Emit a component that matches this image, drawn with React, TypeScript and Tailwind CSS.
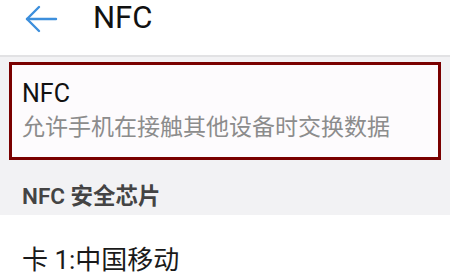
import React from "react";

export default function App() {
  return (
    <div
      className="w-[450px] h-[280px] overflow-hidden bg-[#f2f2f4] flex flex-col"
      style={{ fontFamily: 'Roboto, "Noto Sans CJK SC", sans-serif' }}
    >
      <div className="h-[55px] shrink-0 bg-white flex items-center">
        <svg
          className="ml-[25px] mt-[-18px]"
          width="33"
          height="28"
          viewBox="0 0 33 28"
          fill="none"
          stroke="#3d8fdc"
          strokeWidth="2.4"
          strokeLinecap="round"
          strokeLinejoin="round"
        >
          <path d="M2 14 H31" />
          <path d="M14 2 L2 14 L14 26" />
        </svg>
        <span className="ml-[35px] mt-[-20px] text-[31px] leading-none text-[#111]">NFC</span>
      </div>
      <div className="h-[2px] shrink-0 bg-[#e2e2e4]" />
      <div className="px-[9px] pt-[5px] shrink-0">
        <div className="h-[98px] border-[3px] border-[#7a0000] bg-[#fdfbfd] pl-[10px] flex flex-col">
          <div className="mt-[16px] text-[25px] leading-[26px] text-[#111]">NFC</div>
          <div className="mt-[8px] text-[23px] leading-[26px] text-[#8c8c8c]">
            允许手机在接触其他设备时交换数据
          </div>
        </div>
      </div>
      <div className="h-[55px] shrink-0 flex items-center pl-[22px] pt-[19px] text-[22.5px] font-semibold text-[#444]">
        NFC 安全芯片
      </div>
      <div className="flex-1 bg-white flex items-start pl-[22px] pt-[31px] text-[26px] leading-[28px] text-[#1a1a1a]">
        卡 1:中国移动
      </div>
    </div>
  );
}
